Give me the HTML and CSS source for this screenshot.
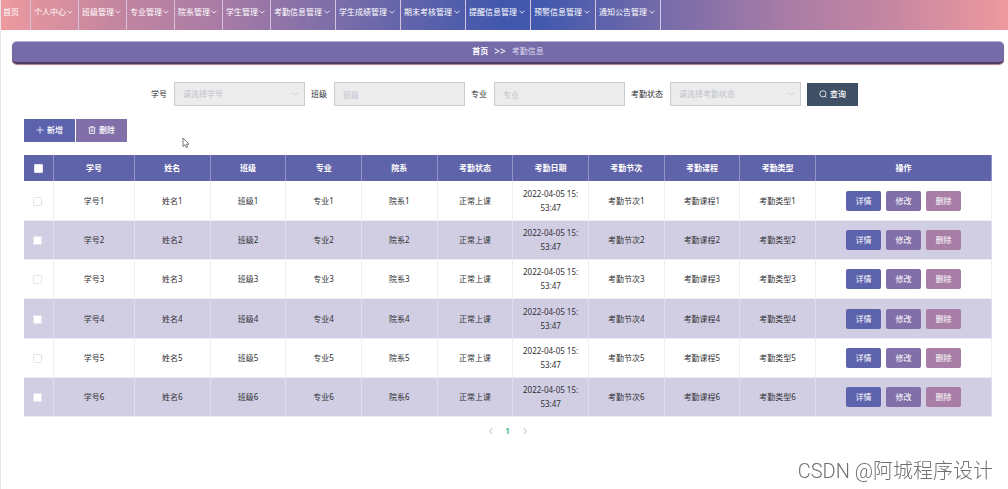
FILE: index.html
```
<!DOCTYPE html>
<html lang="zh-CN">
<head>
<meta charset="utf-8">
<title>考勤信息</title>
<link rel="stylesheet" href="styles.css">
</head>
<body>
<svg class="defs" aria-hidden="true">
  <symbol id="down" viewBox="0 0 8 8"><path d="M1.5 2.7 4 5.2 6.5 2.7"/></symbol>
  <symbol id="left" viewBox="0 0 8 8"><path d="M5.3 1 2.5 4 5.3 7"/></symbol>
  <symbol id="right" viewBox="0 0 8 8"><path d="M2.7 1 5.5 4 2.7 7"/></symbol>
  <symbol id="plus" viewBox="0 0 8 8"><path d="M4 .5v7M.5 4h7"/></symbol>
  <symbol id="search" viewBox="0 0 8 8"><circle cx="3.9" cy="3.8" r="3.1"/><path d="M6 6 7.4 7.5"/></symbol>
  <symbol id="trash" viewBox="0 0 8 8"><path d="M.5 1.8h7M2.8 1.8V.6h2.4v1.2M1.4 1.8v5.7h5.2V1.8M3.2 3.3v2.7M4.8 3.3v2.7"/></symbol>
</svg>
<nav class="nav" id="nav"></nav>
<main class="page">
  <div class="crumb"><a class="crumb-home" href="#">首页</a><span class="crumb-sep">&gt;&gt;</span><span class="crumb-here">考勤信息</span></div>
  <form class="search">
    <label for="no">学号</label>
    <div class="pick"><select class="field" id="no"><option>请选择学号</option></select><svg class="icon pick-arrow"><use href="#down"/></svg></div>
    <label for="cls">班级</label>
    <input class="field" id="cls" type="text" placeholder="班级">
    <label for="major">专业</label>
    <input class="field" id="major" type="text" placeholder="专业">
    <label for="state">考勤状态</label>
    <div class="pick"><select class="field" id="state"><option>请选择考勤状态</option></select><svg class="icon pick-arrow"><use href="#down"/></svg></div>
    <button class="btn btn-search" type="button"><svg class="icon"><use href="#search"/></svg>查询</button>
  </form>
  <div class="tools">
    <button class="btn btn-add" type="button"><svg class="icon"><use href="#plus"/></svg>新增</button>
    <button class="btn btn-del" type="button"><svg class="icon"><use href="#trash"/></svg>删除</button>
  </div>
  <table class="grid">
    <colgroup><col class="col-check"><col class="col-no"><col span="9"><col class="col-ops"></colgroup>
    <thead><tr><th><input class="check" type="checkbox" aria-label="全选"></th><th>学号</th><th>姓名</th><th>班级</th><th>专业</th><th>院系</th><th>考勤状态</th><th>考勤日期</th><th>考勤节次</th><th>考勤课程</th><th>考勤类型</th><th>操作</th></tr></thead>
    <tbody id="rows"></tbody>
  </table>
  <div class="pager">
    <button type="button" aria-label="上一页"><svg class="icon"><use href="#left"/></svg></button>
    <button class="current" type="button">1</button>
    <button type="button" aria-label="下一页"><svg class="icon"><use href="#right"/></svg></button>
  </div>
</main>
<svg class="cursor" viewBox="0 0 8 12" aria-hidden="true"><path d="M1 1v8.5l2-1.8 1.3 2.8 1.4-.6-1.2-2.7H7z"/></svg>
<div class="mark">CSDN @阿城程序设计</div>
<script src="app.js"></script>
</body>
</html>
```
FILE: styles.css
```
* { box-sizing: border-box; }
body {
  margin: 0;
  min-height: 100vh;
  border-left: 1px solid #e6e6e8;
  background: #fff;
  color: #303133;
  font: 8px/14px "Noto Sans", "Noto Sans CJK SC", sans-serif;
}
button, input, select { font: inherit; margin: 0; border-radius: 0; }
a { color: inherit; text-decoration: none; }
.defs { position: absolute; width: 0; height: 0; }
.icon { width: 8px; height: 8px; flex: none; fill: none; stroke: currentColor; stroke-width: 0.8; }

.nav {
  display: flex;
  height: 30px;
  margin-left: -1px;
  background: linear-gradient(90deg, #ee9a9f 0%, #c5869f 11%, #a87ba6 22%, #7a6da9 33.5%, #4057ad 50%, #4359ae 54%, #796ca9 66.5%, #a97ca6 78%, #c586a2 88%, #ee999e 100%);
  color: #fff;
}
.nav-item {
  display: flex;
  align-items: center;
  padding: 0 4px 6px 3px;
  border-right: 1px solid #d5c3dc;
  white-space: nowrap;
}
.nav-item:first-child { padding-right: 11px; }
.nav-item.wide .icon { margin-left: 1px; }

.page { padding: 11px 4px 0 11px; }
.crumb {
  display: flex;
  justify-content: center;
  gap: 6px;
  height: 23px;
  padding-top: 2px;
  border-top: 1px solid #b5aed1;
  border-bottom: 2px solid #4f3d61;
  border-radius: 5px;
  background: #756ba8;
  box-shadow: 0 1px 1px #a67b94;
  color: #fff;
}
.crumb-home { font-weight: 700; }
.crumb-sep { font-size: 10px; }
.crumb-here { color: #ded9ec; }

.search {
  display: flex;
  justify-content: center;
  align-items: center;
  gap: 6px;
  margin-top: 18px;
  padding-right: 7px;
}
.search label { padding-right: 1px; }
.field {
  display: block;
  width: 131px;
  height: 24px;
  padding: 0 8px;
  border: 1px solid #ccc;
  outline: 0;
  background: #ececec;
  color: #c0c4cc;
  appearance: none;
}
.field::placeholder { color: #c0c4cc; opacity: 1; }
.pick { position: relative; }
.pick-arrow { position: absolute; right: 6px; top: 8px; color: #c0c4cc; }
.btn {
  display: flex;
  align-items: center;
  justify-content: center;
  gap: 3px;
  width: 51px;
  height: 23px;
  padding: 0 0 1px;
  border: 0;
  color: #fff;
  font-weight: 500;
}
.btn-search { background: #3f4f66; }
.tools { display: flex; gap: 1px; margin: 13px 0 0 12px; }
.btn-add { background: #5c62ac; }
.btn-del { background: #806fa9; }

.grid {
  width: calc(100% - 24px);
  margin: 13px 12px 0;
  border-collapse: separate;
  border-spacing: 0;
  table-layout: fixed;
  text-align: center;
}
.col-check { width: 30px; }
.col-no { width: 81px; }
.col-ops { width: 176px; }
.grid th {
  height: 26px;
  padding: 0;
  border-right: 1px solid #9194c8;
  background: #5f63aa;
  color: #fff;
  font-weight: 700;
}
.grid td {
  padding: 5px 4px;
  border-right: 1px solid #ebeef5;
  border-bottom: 1px solid #ebeef5;
}
.grid tr:nth-child(3n+1) td { padding-top: 6px; }
.grid tr:nth-child(even) td { background: #d1cee3; border-right-color: #dfddec; }
.check {
  display: block;
  width: 9px;
  height: 9px;
  margin: 0 auto;
  border: 1px solid #e3e5ec;
  border-radius: 1px;
  background: #fff;
  appearance: none;
}
td .check { margin-left: 5px; }
.ops { display: flex; justify-content: center; gap: 5px; }
.op {
  width: 35px;
  height: 20px;
  padding: 0 0 1px;
  border: 0;
  border-radius: 2px;
  color: #fff;
}
.op-view { background: #5c62ac; }
.op-edit { background: #806fa9; }
.op-del { background: #a87da6; }

.pager { display: flex; justify-content: center; margin-top: 6px; padding-right: 1px; }
.pager button {
  display: flex;
  align-items: center;
  justify-content: center;
  width: 17px;
  height: 16px;
  padding: 0;
  border: 0;
  background: none;
  color: #a5a8ae;
}
.pager .current { color: #3fb99a; font-weight: 700; }

.cursor { position: absolute; left: 182px; top: 137px; width: 8px; height: 12px; fill: #fff; stroke: #555; stroke-width: 0.8; }
.mark {
  position: fixed;
  right: 15px;
  bottom: 5px;
  color: #707070;
  font: 300 20px/26px Roboto, "Noto Sans CJK SC", sans-serif;
  text-shadow: -1px -1px 0 #fff;
}
```
FILE: app.js
```
const menus = ["首页", "个人中心", "班级管理", "专业管理", "院系管理", "学生管理", "考勤信息管理", "学生成绩管理", "期末考核管理", "提醒信息管理", "预警信息管理", "通知公告管理"];
const arrow = '<svg class="icon"><use href="#down"/></svg>';
document.getElementById("nav").innerHTML = menus
  .map((name, i) => `<a class="nav-item${name.length > 4 ? " wide" : ""}" href="#">${name}${i ? arrow : ""}</a>`)
  .join("");

document.getElementById("rows").innerHTML = [1, 2, 3, 4, 5, 6]
  .map((n) => `<tr>
    <td><input class="check" type="checkbox" aria-label="选择学号${n}"></td>
    <td>学号${n}</td><td>姓名${n}</td><td>班级${n}</td><td>专业${n}</td><td>院系${n}</td>
    <td>正常上课</td><td>2022-04-05 15:<br>53:47</td>
    <td>考勤节次${n}</td><td>考勤课程${n}</td><td>考勤类型${n}</td>
    <td><div class="ops">
      <button class="op op-view" type="button">详情</button>
      <button class="op op-edit" type="button">修改</button>
      <button class="op op-del" type="button">删除</button>
    </div></td>
  </tr>`)
  .join("");
```
